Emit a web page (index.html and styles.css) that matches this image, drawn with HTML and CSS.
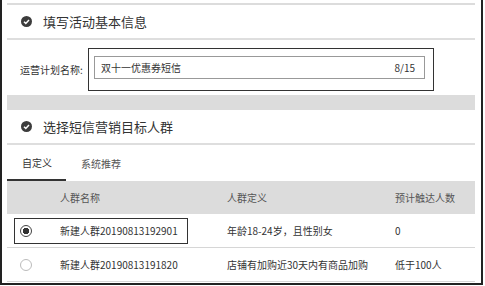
FILE: index.html
```html
<!DOCTYPE html>
<html lang="zh-CN">
<head>
  <meta charset="UTF-8">
  <title>短信营销</title>
  <link rel="stylesheet" href="styles.css">
</head>
<body>
  <div class="frame">
    <div class="band band-top"></div>

    <div class="section-head">
      <svg class="check" width="11" height="11" viewBox="0 0 11 11">
        <circle cx="5.5" cy="5.5" r="5.5" fill="#3c3c3c"/>
        <polyline points="3,5.7 4.8,7.4 8,4" fill="none" stroke="#fff" stroke-width="1.5"/>
      </svg>
      <span>填写活动基本信息</span>
    </div>
    <div class="divider"></div>

    <div class="form-row">
      <label class="form-label">运营计划名称:</label>
      <div class="mark-box">
        <div class="input">
          <span>双十一优惠券短信</span>
          <span class="count">8/15</span>
        </div>
      </div>
    </div>

    <div class="band band-mid"></div>

    <div class="section-head">
      <svg class="check" width="11" height="11" viewBox="0 0 11 11">
        <circle cx="5.5" cy="5.5" r="5.5" fill="#3c3c3c"/>
        <polyline points="3,5.7 4.8,7.4 8,4" fill="none" stroke="#fff" stroke-width="1.5"/>
      </svg>
      <span>选择短信营销目标人群</span>
    </div>
    <div class="divider"></div>

    <div class="tabs">
      <div class="tab active">自定义</div>
      <div class="tab">系统推荐</div>
    </div>

    <div class="table">
      <div class="row head">
        <div></div>
        <div>人群名称</div>
        <div>人群定义</div>
        <div>预计触达人数</div>
      </div>
      <div class="row">
        <div><span class="radio checked"></span></div>
        <div>新建人群20190813192901</div>
        <div>年龄18-24岁，且性别女</div>
        <div>0</div>
        <div class="row-mark"></div>
      </div>
      <div class="row">
        <div><span class="radio"></span></div>
        <div>新建人群20190813191820</div>
        <div>店铺有加购近30天内有商品加购</div>
        <div>低于100人</div>
      </div>
    </div>
  </div>
</body>
</html>
```

FILE: styles.css
```css
body {
  margin: 0;
  font-family: "Noto Sans CJK SC", "Noto Sans", sans-serif;
  color: #333;
  background: #fff;
}
.frame {
  box-sizing: border-box;
  width: 483px;
  height: 285px;
  border: 2px solid #222;
  border-top: none;
  padding: 3px 6px 0 5px;
  overflow: hidden;
}
.band {
  background: #dcdcdc;
}
.band-top {
  height: 2px;
}
.band-mid {
  height: 15px;
}
.divider {
  height: 2px;
  background: #dedede;
}
.section-head {
  height: 33px;
  display: flex;
  align-items: center;
  font-size: 13px;
  color: #333;
}
.check {
  margin-left: 14px;
  margin-right: 11px;
}
.form-row {
  display: flex;
  align-items: center;
  padding: 8px 0 4px 13px;
  height: 43px;
}
.form-label {
  font-size: 10px;
  width: 68px;
}
.mark-box {
  box-sizing: border-box;
  width: 346px;
  height: 43px;
  border: 1px solid #333;
  padding: 7px 8px 0 5px;
}
.input {
  box-sizing: border-box;
  height: 23px;
  border: 1px solid #999;
  display: flex;
  align-items: center;
  justify-content: space-between;
  padding: 0 9px 0 6px;
  font-size: 10px;
}
.tabs {
  display: flex;
  height: 36px;
}
.tab {
  box-sizing: border-box;
  padding: 0 14px 0 15px;
  display: flex;
  align-items: center;
  font-size: 10px;
  color: #555;
}
.tab.active {
  color: #333;
  border-bottom: 2px solid #333;
}
.row {
  position: relative;
  display: grid;
  grid-template-columns: 53px 167px 168px 1fr;
  align-items: center;
  height: 33px;
  border-bottom: 1px solid #d6d6d6;
  font-size: 10px;
}
.row.head {
  background: #dcdcdc;
  color: #555;
  border-bottom: none;
}
.radio {
  display: block;
  box-sizing: border-box;
  width: 12px;
  height: 12px;
  margin-left: 13px;
  border: 1px solid #bbb;
  border-radius: 50%;
}
.radio.checked {
  border-color: #444;
  background: radial-gradient(circle, #333 0 3px, #fff 3.5px);
}
.row-mark {
  position: absolute;
  left: 7px;
  top: 4px;
  width: 174px;
  height: 26px;
  box-sizing: border-box;
  border: 1px solid #333;
}
```
